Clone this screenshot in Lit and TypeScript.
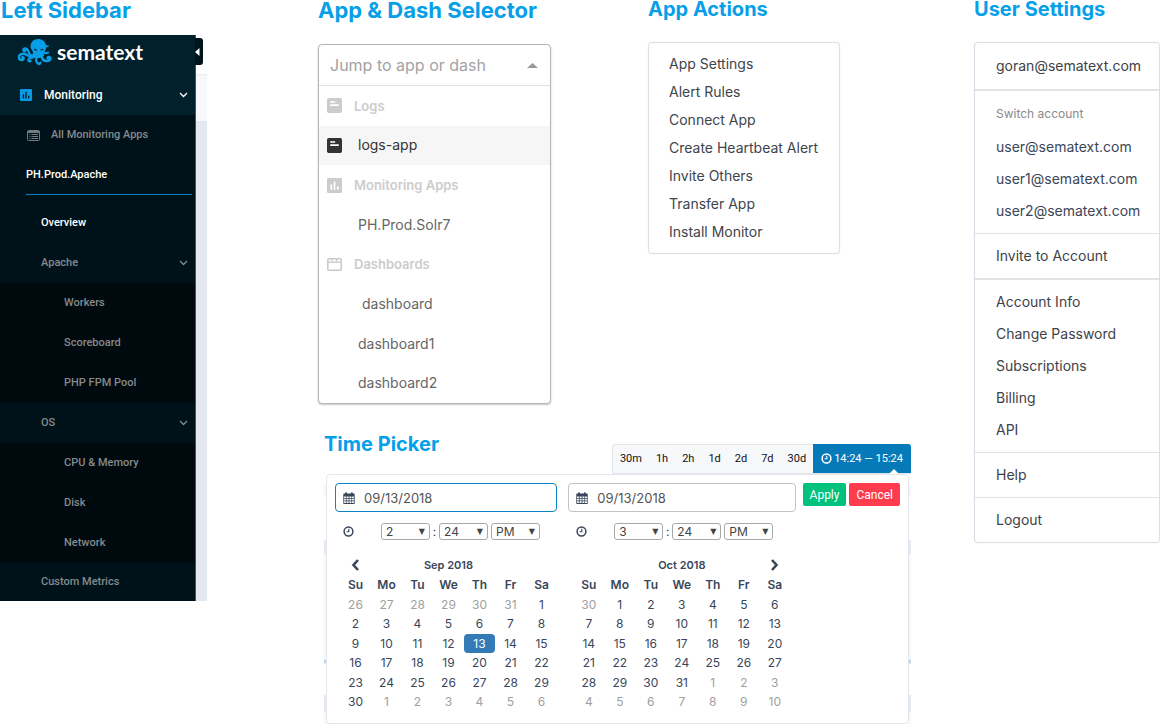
import { LitElement, html, svg, css, nothing } from "lit";
import { customElement, property } from "lit/decorators.js";
import { classMap } from "lit/directives/class-map.js";

const base = css`
  *,
  *::before,
  *::after {
    box-sizing: border-box;
  }
  a {
    color: inherit;
    text-decoration: none;
  }
  ul {
    list-style: none;
    margin: 0;
    padding: 0;
  }
  button,
  input,
  select {
    font: inherit;
    color: inherit;
    margin: 0;
  }
  svg {
    display: block;
    flex: none;
  }
`;

const chevron = svg`<svg width="9" height="6" viewBox="0 0 9 6" fill="none" stroke="currentColor" stroke-width="1.3"><path d="M1 1l3.5 3.5L8 1"/></svg>`;

const barsIcon = (bg: string, fg: string, size: number) => svg`
  <svg width=${size} height=${size} viewBox="0 0 14 14">
    <rect width="14" height="14" rx="1.2" fill=${bg}/>
    <path d="M3.2 6h1.6v5H3.2zM6.2 3.2h1.6V11H6.2zM9.3 8h1.6v3H9.3z" fill=${fg}/>
  </svg>`;

const logsIcon = (bg: string) => svg`
  <svg width="15" height="15" viewBox="0 0 14 14">
    <rect width="14" height="14" rx="1.6" fill=${bg}/>
    <path d="M3 3h4.600v1.400H3zM3 5.900h8v1.600H3z" fill="#fff"/>
  </svg>`;

const windowIcon = svg`
  <svg width="15" height="13" viewBox="0 0 15 13" fill="none" stroke="#c9c9c9">
    <rect x=".8" y=".8" width="13.4" height="11.4" rx="1" stroke-width="1.5"/>
    <path d="M1 4.2h13" stroke-width="1.4"/>
    <path d="M5 1v2.6M9.5 1v2.6" stroke-width="1.2"/>
  </svg>`;

const listIcon = svg`
  <svg width="13" height="11" viewBox="0 0 13 11">
    <rect x=".5" y=".5" width="12" height="10" rx="1" fill="none" stroke="#737b7f"/>
    <path d="M1 1h11v2H1z" fill="#737b7f"/>
    <path d="M2.500 4.500h1M2.500 6.500h1M2.500 8.500h1M4.500 4.500h6.500M4.500 6.500h6.500M4.500 8.500h6.500" stroke="#737b7f"/>
  </svg>`;

const clockIcon = svg`
  <svg width="11" height="11" viewBox="0 0 11 11" fill="none" stroke="currentColor">
    <circle cx="5.5" cy="5.5" r="4.4" stroke-width="1.5"/>
    <path d="M5.8 2.8v3H3.6" stroke-width="1.1"/>
  </svg>`;

const calendarIcon = svg`
  <svg width="12" height="12" viewBox="0 0 12 12">
    <path fill="#39465a" fill-rule="evenodd" d="M1 1.6h1.2V.9q0-.7.9-.7t.9.7v.7h4V.9q0-.7.9-.7t.9.7v.7H11q.7 0 .7.7v9q0 .6-.7.6H1q-.7 0-.7-.6v-9q0-.7.7-.7zM1.1 4.5v1.7h1.8V4.5zm2.5 0v1.7h2V4.5zm2.8 0v1.7h2V4.5zm2.7 0v1.7h1.8V4.5zM1.1 6.9v1.7h1.8V6.9zm2.5 0v1.7h2V6.9zm2.8 0v1.7h2V6.9zm2.7 0v1.7h1.8V6.9zM1.1 9.3v1.8h1.8V9.3zm2.5 0v1.8h2V9.3zm2.8 0v1.8h2V9.3zm2.7 0v1.8h1.8V9.3z"/>
  </svg>`;

const octopus = svg`
  <svg width="35" height="28" viewBox="0 0 35 28" fill="none" stroke="#069fe8" stroke-linecap="round" stroke-linejoin="round">
    <path fill="#069fe8" stroke="none" d="M13.500 8.500C13.500 4 17 1 21 1c4 0 7.200 2.400 8 6 .9.600 2 .8 3.300.7-.8 1.100-1.900 1.600-3.300 1.700.1 2.300-.8 3.700-2 4.800-.8 1-.5 2.300.5 3.300l-4.500 2.500-6-.5c-2-1-2.300-2.500-1.200-4 .9-1.500-.3-2.300-1-3.500-.5-.9-1.300-2-1.300-3.500z"/>
    <path stroke-width="2.200" d="M16 17.500c-3.500 1-4-2.500-5-5C10 9.800 6.500 9.800 6.300 12c0 1.300 1.300 1.600 2 .9"/>
    <path stroke-width="2.400" d="M16.500 19c-4 1-5.500-2-8.500-3-3.200-1-6.300.8-6.200 3.500.1 2.500 3.500 3.300 4.700 1.500.7-1.300-.5-2.200-1.300-1.700"/>
    <path stroke-width="2.300" d="M18 18.500c-2.500 1.500-5.500 1-6.500 2.800-.7 1.500.9 2.600 2 1.700"/>
    <path stroke-width="2.300" d="M20 19c-1.500 2.500-1 5.500 1.300 6.800 1 .5 2.200 0 2-1.200"/>
    <path stroke-width="2.500" d="M24.500 17.500c.5 3.500 2.500 5.700 5.700 5.500 3.300-.2 4.200-3.200 2.200-4-1.300-.4-2 .6-1.600 1.300"/>
    <path stroke-width="2" d="M26 14.500c2 1 3.500.8 5.200 0"/>
    <path stroke="#00212b" stroke-width="1.200" d="M17.500 11.300l2 1M24 12l1.800-.6"/>
  </svg>`;

@customElement("side-nav")
export class SideNav extends LitElement {
  static styles = [
    base,
    css`
      :host {
        display: block;
        position: relative;
        padding-right: 11px;
        font: 500 11px/16px Roboto, sans-serif;
        color: #858a8d;
        background: linear-gradient(#fff 39px, #e6e8ee 39px, #f7f8fb 41px, #f7f8fb 86px, #dfe3ea 86px, #e4e8f0 88px);
      }
      .nav {
        background: #001219;
        border-right: 1px solid #46545a;
      }
      .top {
        background: #00212b;
        color: #fff;
      }
      .brand {
        display: flex;
        align-items: center;
        gap: 5px;
        height: 40px;
        padding: 0 0 6px 17px;
        font: 700 21px/28px Lato, sans-serif;
      }
      .row {
        display: flex;
        align-items: center;
        height: 40px;
        padding: 0 7px 0 41px;
      }
      .row svg:last-child:not(:first-child) {
        margin-left: auto;
      }
      .section {
        padding-left: 20px;
        font-size: 12px;
      }
      .section a {
        padding-left: 12px;
      }
      .all {
        padding-left: 27px;
      }
      .all a {
        padding-left: 11px;
      }
      .current {
        margin: 0 3px 8px 26px;
        padding: 0;
        border-bottom: 1px solid #0a7fbe;
        color: #fff;
      }
      .active {
        color: #fff;
      }
      .tail {
        height: 38px;
      }
      .sub {
        background: #00090d;
      }
      .sub .row {
        padding-left: 64px;
      }
      .toggle {
        position: absolute;
        top: 3px;
        right: 4px;
        width: 8px;
        height: 27px;
        padding: 0;
        border: 0;
        border-radius: 0 3px 3px 0;
        background: #00141c;
      }
    `,
  ];
  render() {
    const sub = (names: string[]) =>
      html`<ul class="sub">
        ${names.map((n) => html`<li class="row"><a href="#">${n}</a></li>`)}
      </ul>`;
    return html`
      <nav class="nav" aria-label="Main">
        <div class="top">
          <a class="brand" href="#">${octopus}<span>sematext</span></a>
          <div class="row section">${barsIcon("#0a9ae4", "#00212b", 12)}<a href="#">Monitoring</a>${chevron}</div>
        </div>
        <div class="row all">${listIcon}<a href="#">All Monitoring Apps</a></div>
        <div class="row current"><a href="#">PH.Prod.Apache</a></div>
        <div class="row active"><a href="#">Overview</a></div>
        <div class="row"><a href="#">Apache</a>${chevron}</div>
        ${sub(["Workers", "Scoreboard", "PHP FPM Pool"])}
        <div class="row"><a href="#">OS</a>${chevron}</div>
        ${sub(["CPU & Memory", "Disk", "Network"])}
        <div class="row tail"><a href="#">Custom Metrics</a></div>
      </nav>
      <button class="toggle" aria-label="Collapse sidebar">
        <svg width="5" height="8" viewBox="0 0 5 8"><path d="M4.500 0v8L0 4z" fill="#fff" /></svg>
      </button>
    `;
  }
}

@customElement("dash-selector")
export class DashSelector extends LitElement {
  static styles = [
    base,
    css`
      :host {
        display: block;
        border: 1px solid #b5b5b5;
        border-radius: 4px;
        box-shadow: 0 1px 2px #c4c8d0;
        background: #fff;
        font: 14px/20px Inter, sans-serif;
        color: #666;
      }
      .search {
        display: flex;
        align-items: center;
        height: 41px;
        padding: 0 12px 0 11px;
        border-bottom: 1px solid #e2e2e2;
      }
      .search input {
        flex: 1;
        width: 0;
        padding: 0;
        border: 0;
        outline: 0;
        background: none;
        font-size: 16px;
      }
      .search input::placeholder {
        color: #a3a3a3;
        opacity: 1;
      }
      .list {
        display: grid;
        grid-auto-rows: 1fr;
        height: 317px;
      }
      .item {
        display: flex;
        align-items: center;
        padding-left: 39px;
      }
      .group {
        gap: 12px;
        padding-left: 8px;
        color: #ccc;
        font-size: 13px;
        font-weight: 600;
      }
      .picked {
        gap: 16px;
        padding-left: 8px;
        background: #f6f6f6;
        color: #333;
      }
      .indent {
        padding-left: 43px;
      }
    `,
  ];
  render() {
    return html`
      <div class="search">
        <input type="text" aria-label="Jump to app or dash" placeholder="Jump to app or dash" />
        <svg width="11" height="5" viewBox="0 0 11 5"><path d="M0 5L5.500 0 11 5z" fill="#999" /></svg>
      </div>
      <ul class="list">
        <li class="item group">${logsIcon("#ccc")}<span>Logs</span></li>
        <li class="item picked">${logsIcon("#333")}<a href="#">logs-app</a></li>
        <li class="item group">${barsIcon("#ccc", "#fff", 15)}<span>Monitoring Apps</span></li>
        <li class="item"><a href="#">PH.Prod.Solr7</a></li>
        <li class="item group">${windowIcon}<span>Dashboards</span></li>
        <li class="item indent"><a href="#">dashboard</a></li>
        <li class="item"><a href="#">dashboard1</a></li>
        <li class="item"><a href="#">dashboard2</a></li>
      </ul>
    `;
  }
}

@customElement("app-actions")
export class AppActions extends LitElement {
  static styles = [
    base,
    css`
      :host {
        display: block;
        padding: 7px 20px;
        border: 1px solid #d9dee6;
        border-radius: 4px;
        box-shadow: 0 0 1px #d9dee6;
        font: 14px/28px Inter, sans-serif;
        color: #40444b;
        white-space: nowrap;
      }
    `,
  ];
  render() {
    const items = ["App Settings", "Alert Rules", "Connect App", "Create Heartbeat Alert", "Invite Others", "Transfer App", "Install Monitor"];
    return html`<ul>
      ${items.map((i) => html`<li><a href="#">${i}</a></li>`)}
    </ul>`;
  }
}

@customElement("user-settings")
export class UserSettings extends LitElement {
  static styles = [
    base,
    css`
      :host {
        display: block;
        border: 1px solid #d9dee6;
        border-radius: 4px;
        box-shadow: 0 0 1px #d9dee6;
        font: 14px/32px Inter, sans-serif;
        color: #3e4248;
        white-space: nowrap;
      }
      .part {
        padding: 6px 21px;
      }
      .part:first-child {
        padding: 7px 21px;
      }
      .part + .part {
        border-top: 1px solid #dfe1e5;
      }
      .part + .strong {
        border-top: 2px solid #e1e3e6;
      }
      .note {
        color: #8a8a8a;
        font-size: 12px;
        line-height: 34px;
      }
      .users {
        color: #3b4657;
      }
    `,
  ];
  render() {
    const links = (names: string[]) => names.map((n) => html`<li><a href="#">${n}</a></li>`);
    return html`
      <ul class="part">${links(["goran@sematext.com"])}</ul>
      <div class="part strong">
        <div class="note">Switch account</div>
        <ul class="users">${links(["user@sematext.com", "user1@sematext.com", "user2@sematext.com"])}</ul>
      </div>
      <ul class="part">${links(["Invite to Account"])}</ul>
      <ul class="part strong">${links(["Account Info", "Change Password", "Subscriptions", "Billing", "API"])}</ul>
      <ul class="part">${links(["Help"])}</ul>
      <ul class="part">${links(["Logout"])}</ul>
    `;
  }
}

@customElement("month-panel")
export class MonthPanel extends LitElement {
  @property() month = "";
  @property() date = "";
  @property() hour = "";
  @property({ type: Number }) lead = 0;
  @property({ type: Number }) prev = 31;
  @property({ type: Number }) days = 30;
  @property({ type: Number }) selected = 0;
  @property() arrow = "left";
  @property({ type: Boolean }) focused = false;

  static styles = [
    base,
    css`
      :host {
        display: block;
        min-width: 0;
      }
      .field {
        display: flex;
        align-items: center;
        gap: 9px;
        height: 29px;
        padding: 0 7px;
        border: 1px solid #c3c3c3;
        border-radius: 4px;
        color: #555;
        font-size: 13px;
      }
      .focused {
        border-color: #0e83c4;
      }
      .field input {
        flex: 1;
        width: 0;
        padding: 0;
        border: 0;
        outline: 0;
        background: none;
      }
      .time {
        display: flex;
        align-items: center;
        height: 17px;
        margin: 11px 0 15px;
        padding-left: 8px;
        color: #39465a;
      }
      .hours {
        margin-left: 27px;
      }
      .pick {
        position: relative;
        color: #444;
      }
      .pick::after {
        content: "▼";
        position: absolute;
        right: 5px;
        top: 0;
        font: 8px/17px "DejaVu Sans", sans-serif;
        pointer-events: none;
      }
      .pick select {
        display: block;
        width: 49px;
        height: 17px;
        padding: 0 4px;
        border: 1px solid #a9a9a9;
        border-radius: 3px;
        appearance: none;
        background: #fff;
        font-size: 12px;
        line-height: 15px;
      }
      .colon {
        width: 9px;
        text-align: center;
      }
      .ampm {
        margin-left: 3px;
      }
      .cal {
        margin-left: 5px;
        border-collapse: collapse;
        table-layout: fixed;
        width: 217px;
        color: #39465a;
        font-size: 12px;
        line-height: 16px;
        text-align: center;
      }
      th,
      td {
        height: 20px;
        padding: 0;
      }
      tr:nth-child(odd) td {
        height: 19px;
      }
      th {
        font-weight: 600;
      }
      .title {
        font-size: 11px;
      }
      .off {
        color: #a0a0a0;
      }
      .on {
        background: #337ab7;
        color: #fff;
        border-radius: 4px;
      }
      .step {
        display: block;
        margin: 0 auto;
        padding: 0;
        border: 0;
        background: none;
      }
    `,
  ];

  cell(i: number) {
    const n = i - this.lead + 1;
    const off = n < 1 || n > this.days;
    const label = n < 1 ? this.prev + n : n > this.days ? n - this.days : n;
    return html`<td class=${classMap({ off, on: n === this.selected && !off })}>${label}</td>`;
  }

  step(side: string) {
    if (side !== this.arrow) return nothing;
    const left = side === "left";
    return html`<button class="step" aria-label=${left ? "Previous month" : "Next month"}>
      <svg width="9" height="12" viewBox="0 0 9 12" fill="none" stroke="currentColor" stroke-width="2.600">
        <path d=${left ? "M7 1L2.500 6L7 11" : "M2 1L6.500 6L2 11"} />
      </svg>
    </button>`;
  }

  render() {
    const rows = [0, 1, 2, 3, 4, 5];
    const cols = [0, 1, 2, 3, 4, 5, 6];
    return html`
      <label class=${classMap({ field: true, focused: this.focused })}>
        ${calendarIcon}<input type="text" aria-label="Date" .value=${this.date} />
      </label>
      <div class="time">
        ${clockIcon}
        <span class="pick hours"><select aria-label="Hour"><option>${this.hour}</option></select></span>
        <span class="colon">:</span>
        <span class="pick"><select aria-label="Minute"><option>24</option></select></span>
        <span class="pick ampm"><select aria-label="AM or PM"><option>PM</option></select></span>
      </div>
      <table class="cal">
        <thead>
          <tr class="title">
            <th>${this.step("left")}</th>
            <th colspan="5">${this.month}</th>
            <th>${this.step("right")}</th>
          </tr>
          <tr>${["Su", "Mo", "Tu", "We", "Th", "Fr", "Sa"].map((d) => html`<th>${d}</th>`)}</tr>
        </thead>
        <tbody>
          ${rows.map((r) => html`<tr>${cols.map((c) => this.cell(r * 7 + c))}</tr>`)}
        </tbody>
      </table>
    `;
  }
}

@customElement("time-picker")
export class TimePicker extends LitElement {
  static styles = [
    base,
    css`
      :host {
        display: block;
        font: 12px/16px Inter, sans-serif;
      }
      .ranges {
        display: flex;
        width: fit-content;
        margin-left: auto;
        height: 30px;
        border: 1px solid #e2e5ea;
        border-radius: 3px 3px 0 0;
        background: #f6f8fa;
        color: #111;
        font: 11px/16px Roboto, sans-serif;
      }
      .ranges button {
        padding: 0 7px;
        border: 0;
        background: none;
      }
      .ranges .span {
        position: relative;
        display: flex;
        align-items: center;
        gap: 2px;
        margin: -1px -1px 0 0;
        padding: 0 8px;
        border-radius: 0 3px 0 0;
        background: #067ab8;
        color: #fff;
      }
      .span::after {
        content: "";
        position: absolute;
        right: 12px;
        bottom: -1px;
        border: 5px solid transparent;
        border-top: 0;
        border-bottom-color: #fff;
      }
      .frame {
        padding: 0 2px;
        background: linear-gradient(#fff 10px, #f4f6f9 10px, #f4f6f9 21px, #fff 22px, #fff 66px, #e4e8f0 66px, #e4e8f0 80px, #f7f8fa 81px, #f7f8fa 185px, #b9d6e6 186px, #b9d6e6 189px, #fff 190px, #fff 221px, #e4e8f0 221px, #e4e8f0 238px, #f7f8fa 239px);
      }
      .panel {
        display: flex;
        align-items: flex-start;
        padding: 8px 8px 11px;
        border: 1px solid #e3e7ed;
        border-radius: 4px;
        background: #fff;
      }
      .from {
        flex: 223;
        margin-right: 11px;
      }
      .to {
        flex: 228;
        margin-right: 7px;
      }
      .actions {
        display: flex;
        gap: 3px;
      }
      .actions button {
        height: 23px;
        padding: 0 7px;
        border: 0;
        border-radius: 2px;
        color: #fff;
        font: 12px/16px Roboto, sans-serif;
      }
      .apply {
        background: #00c27c;
      }
      .cancel {
        background: #ff3b4e;
      }
    `,
  ];
  render() {
    return html`
      <div class="ranges">
        ${["30m", "1h", "2h", "1d", "2d", "7d", "30d"].map((r) => html`<button>${r}</button>`)}
        <button class="span">${clockIcon}14:24 — 15:24</button>
      </div>
      <div class="frame">
        <div class="panel">
          <month-panel class="from" month="Sep 2018" date="09/13/2018" hour="2" lead="6" prev="31" days="30" selected="13" arrow="left" focused></month-panel>
          <month-panel class="to" month="Oct 2018" date="09/13/2018" hour="3" lead="1" prev="30" days="31" arrow="right"></month-panel>
          <div class="actions"><button class="apply">Apply</button><button class="cancel">Cancel</button></div>
        </div>
      </div>
    `;
  }
}

@customElement("app-root")
export class AppRoot extends LitElement {
  static styles = [
    base,
    css`
      :host {
        display: flex;
        align-items: flex-start;
        background: #fff;
      }
      h2 {
        margin: 0 0 24px;
        font: 700 22px/20px Inter, sans-serif;
        color: #069fe8;
        white-space: nowrap;
      }
      .small {
        font-size: 20px;
        line-height: 18px;
      }
      .side {
        flex: none;
        width: 207px;
      }
      .side h2 {
        margin: 0 0 15px 1px;
      }
      .middle {
        flex: 1;
        min-width: 0;
        margin: 0 63px 0 111px;
      }
      .upper {
        display: flex;
        align-items: flex-start;
        justify-content: space-between;
        padding-right: 71px;
      }
      .selector {
        width: 233px;
      }
      .actions {
        width: 192px;
      }
      .picker {
        margin-top: 31px;
        padding-left: 6px;
      }
      .picker h2 {
        margin-bottom: -9px;
      }
      .settings {
        flex: none;
        width: 186px;
      }
    `,
  ];
  render() {
    return html`
      <section class="side"><h2>Left Sidebar</h2><side-nav></side-nav></section>
      <div class="middle">
        <div class="upper">
          <section class="selector"><h2>App &amp; Dash Selector</h2><dash-selector></dash-selector></section>
          <section class="actions"><h2 class="small">App Actions</h2><app-actions></app-actions></section>
        </div>
        <section class="picker"><h2 class="small">Time Picker</h2><time-picker></time-picker></section>
      </div>
      <section class="settings"><h2 class="small">User Settings</h2><user-settings></user-settings></section>
    `;
  }
}
